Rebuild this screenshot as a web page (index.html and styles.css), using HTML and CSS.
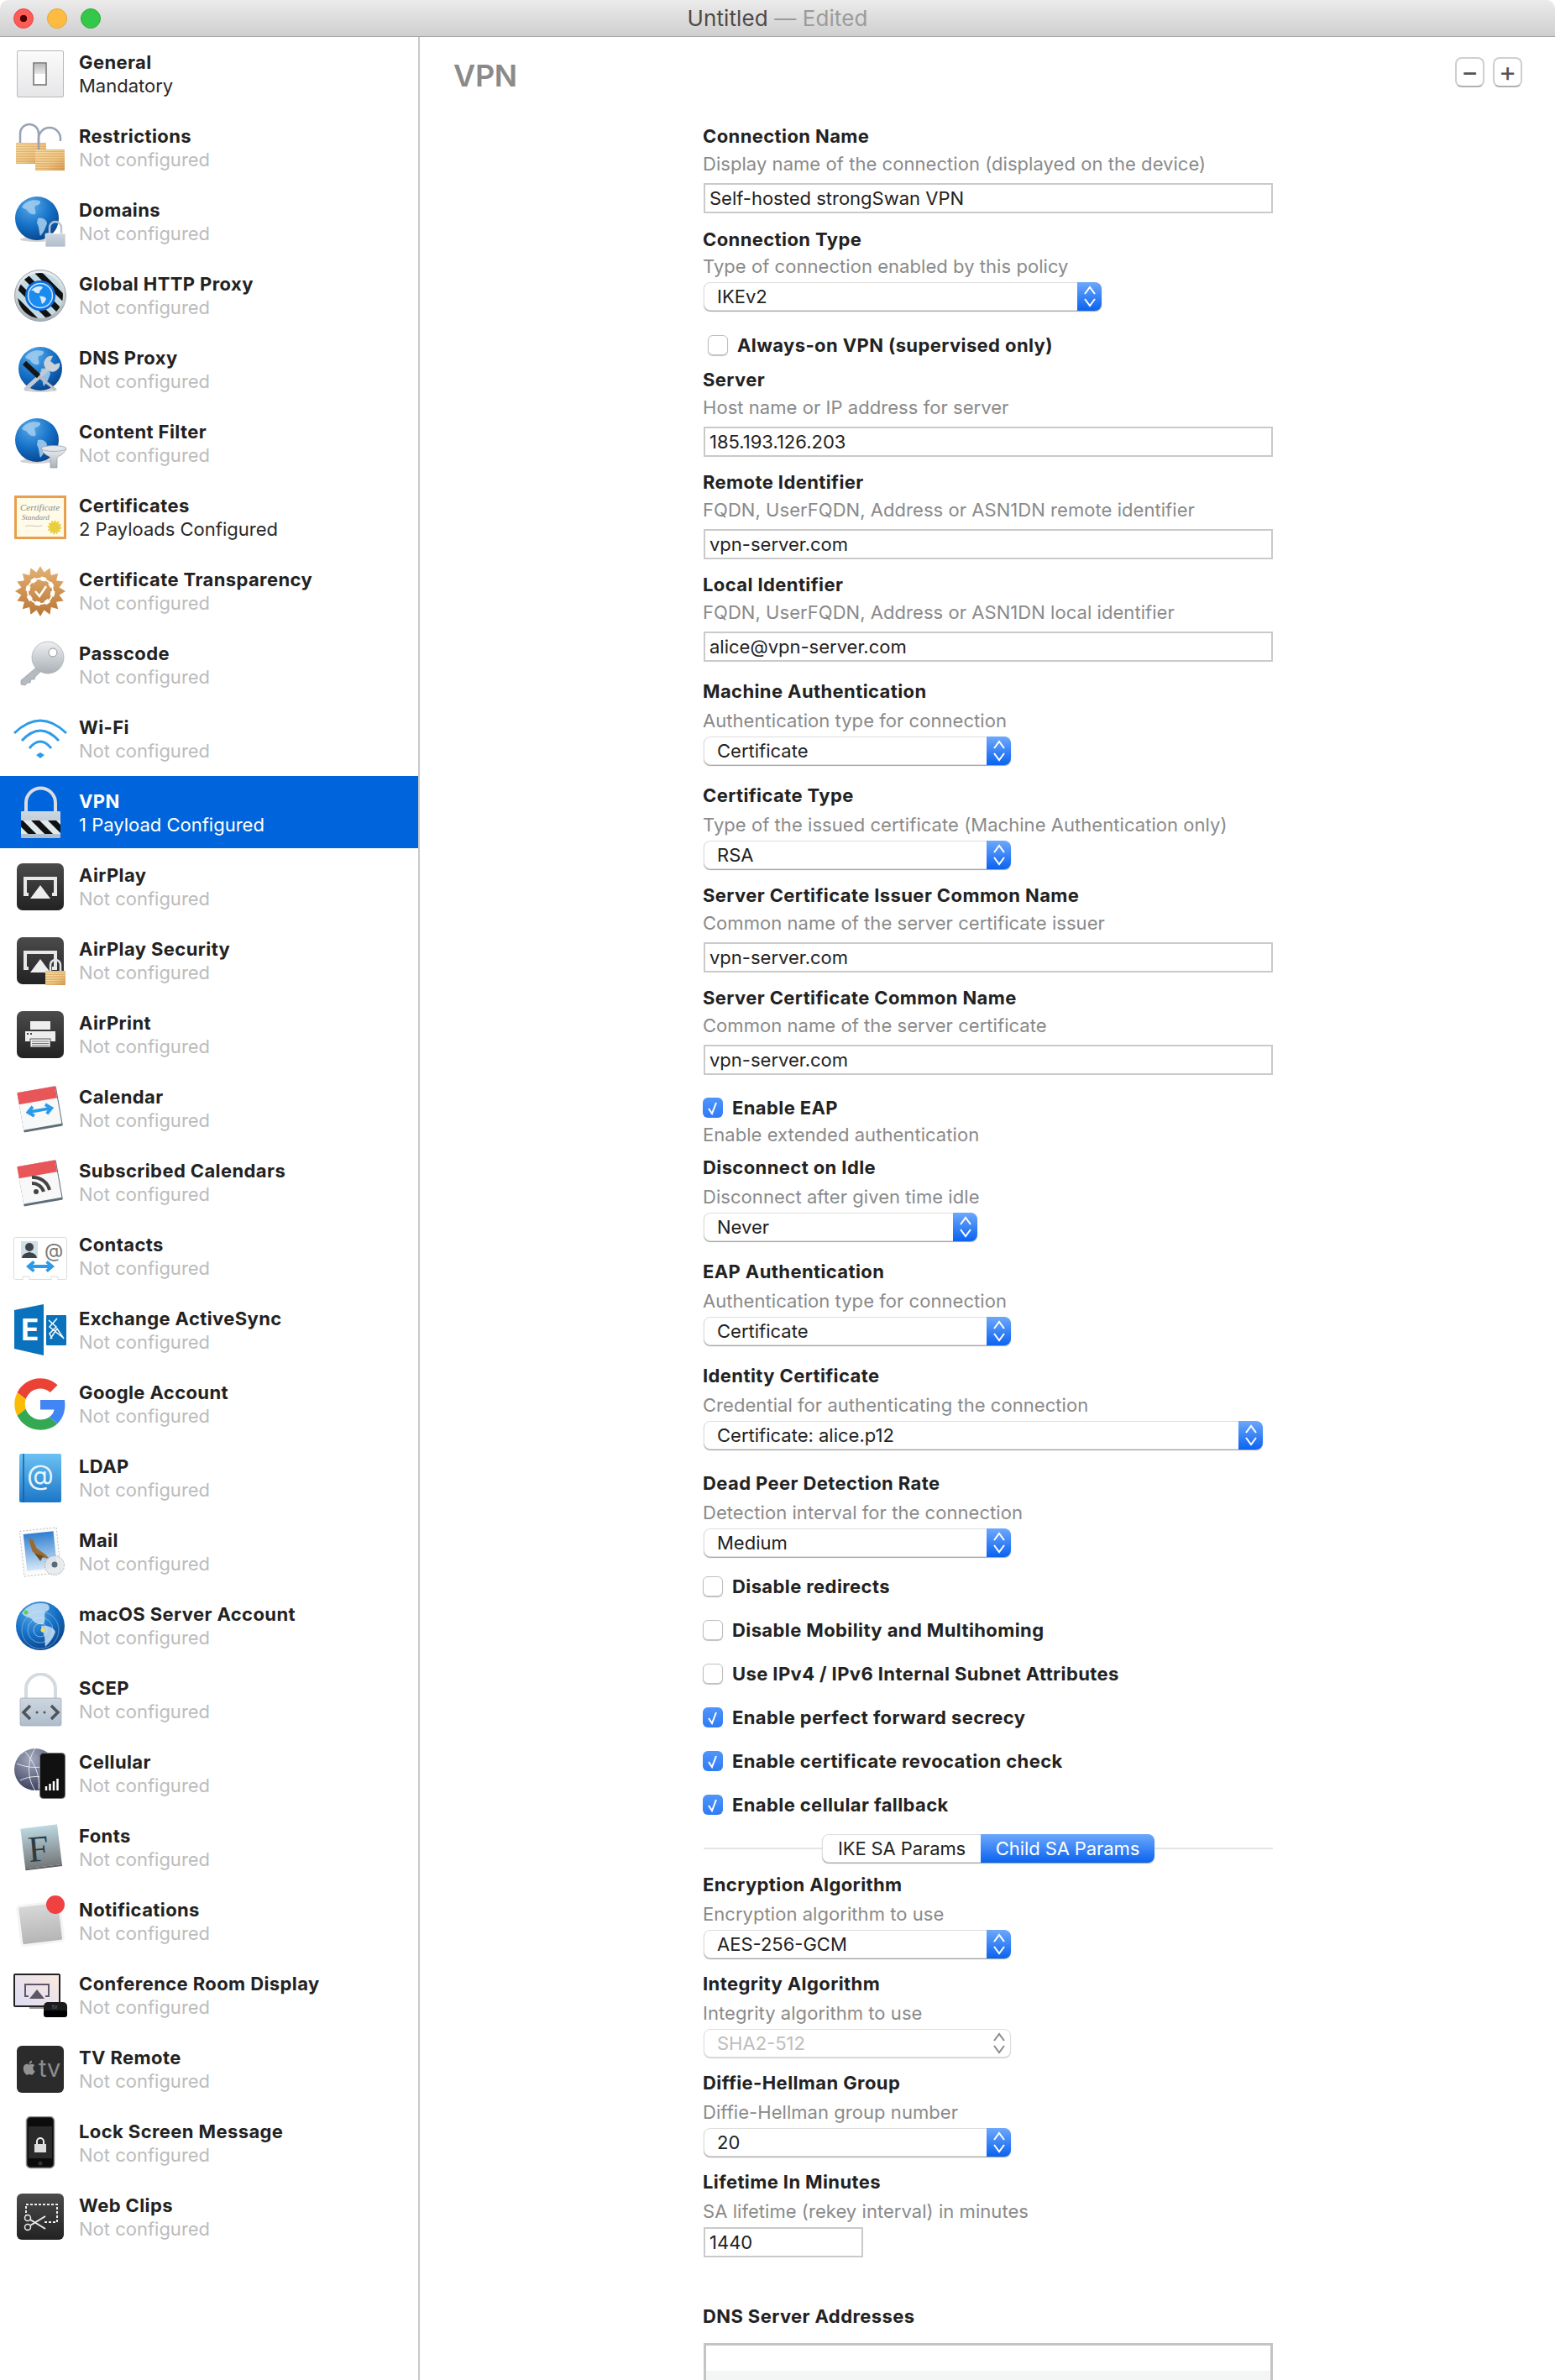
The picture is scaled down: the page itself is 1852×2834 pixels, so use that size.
FILE: index.html
```html
<!DOCTYPE html>
<html>
<head>
    <meta charset="utf-8">
    <title>Untitled</title>
    <link rel="stylesheet" href="styles.css">
</head>
<body>
    <svg class="defs" width="0" height="0">
        <defs>
            <radialGradient id="gGlobe" cx=".36" cy=".22" r=".85"><stop offset="0" stop-color="#57a9ea"/><stop offset=".55" stop-color="#1570c6"/><stop offset="1" stop-color="#063f87"/></radialGradient>
            <radialGradient id="gGlobeGrey" cx=".4" cy=".25" r=".85"><stop offset="0" stop-color="#a5acc0"/><stop offset="1" stop-color="#2e3350"/></radialGradient>
            <linearGradient id="gPaper" x1="0" y1="0" x2="0" y2="1"><stop offset="0" stop-color="#fbfbfb"/><stop offset="1" stop-color="#e6e6e8"/></linearGradient>
            <linearGradient id="gSwitch" x1="0" y1="0" x2="0" y2="1"><stop offset="0" stop-color="#bbb"/><stop offset="1" stop-color="#e8e8e8"/></linearGradient>
            <linearGradient id="gGold" x1="0" y1="0" x2="1" y2="1"><stop offset="0" stop-color="#f9e3b0"/><stop offset=".6" stop-color="#f0c98a"/><stop offset="1" stop-color="#d99a55"/></linearGradient>
            <linearGradient id="gDark" x1="0" y1="0" x2="0" y2="1"><stop offset="0" stop-color="#4b4b4b"/><stop offset="1" stop-color="#222"/></linearGradient>
            <linearGradient id="gSilver" x1="0" y1="0" x2="0" y2="1"><stop offset="0" stop-color="#eef0f2"/><stop offset="1" stop-color="#aab0b6"/></linearGradient>
            <linearGradient id="gSteel" x1="0" y1="0" x2="0" y2="1"><stop offset="0" stop-color="#ced7e0"/><stop offset="1" stop-color="#aebccb"/></linearGradient>
            <linearGradient id="gBadge" x1="0" y1="0" x2="0" y2="1"><stop offset="0" stop-color="#e4b273"/><stop offset="1" stop-color="#b97636"/></linearGradient>
            <linearGradient id="gBook" x1="0" y1="0" x2="0" y2="1"><stop offset="0" stop-color="#6cc2f4"/><stop offset="1" stop-color="#1b76c8"/></linearGradient>
            <linearGradient id="gSky" x1="0" y1="0" x2="0" y2="1"><stop offset="0" stop-color="#2f7fd0"/><stop offset="1" stop-color="#d5e8f7"/></linearGradient>
            <linearGradient id="gFont" x1="0" y1="0" x2="0" y2="1"><stop offset="0" stop-color="#bcd8e1"/><stop offset="1" stop-color="#75787a"/></linearGradient>
            <linearGradient id="gNote" x1="0" y1="0" x2="0" y2="1"><stop offset="0" stop-color="#d8d8d8"/><stop offset="1" stop-color="#b4b4b4"/></linearGradient>
            <linearGradient id="gScreen" x1="0" y1="1" x2="1" y2="0"><stop offset="0" stop-color="#dcdcf6"/><stop offset="1" stop-color="#fbe9dd"/></linearGradient>
            <pattern id="goldLines" width="2" height="2" patternUnits="userSpaceOnUse"><rect width="2" height="1" fill="#c98a3c" opacity=".45"/></pattern>
            <pattern id="zebra" width="14" height="14" patternUnits="userSpaceOnUse" patternTransform="rotate(-45)"><rect width="7" height="14" fill="#111"/></pattern>
            <clipPath id="ringClip"><circle cx="32" cy="32" r="27"/></clipPath>
            <symbol id="globe" viewBox="0 0 56 56">
                <ellipse cx="28" cy="52" rx="20" ry="3" fill="#000" opacity=".18"/>
                <circle cx="28" cy="27" r="26" fill="url(#gGlobe)"/>
                <path d="M10 13C15 6 23 4 31 6c3 2-1 6-5 6-2 4 2 6 0 10-4 1-8-1-10-5-2-2-5-1-6-4z" fill="#a8d0ef" opacity=".8"/>
                <path d="M29 27c5-2 11 2 11 6-2 6-4 11-8 15-2-6-1-11-4-15z" fill="#a8d0ef" opacity=".85"/>
            </symbol>
            <symbol id="chevrons" viewBox="0 0 16 28">
                <path d="M2 11L8 3l6 8M2 17l6 8 6-8" fill="none" stroke="currentColor" stroke-width="2"/>
            </symbol>
            <symbol id="check" viewBox="0 0 24 24">
                <path d="M7 13l4 6 5-13" fill="none" stroke="#fff" stroke-width="2"/>
            </symbol>
            <symbol id="swap" viewBox="0 0 36 16">
                <path d="M3 8H33M10 2L3 8l7 6M26 2l7 6-7 6" fill="none" stroke="#2a9bea" stroke-width="4"/>
            </symbol>
        </defs>
    </svg>

    <div class="window">
        <header class="titlebar">
            <div class="lights">
                <span class="light red"></span>
                <span class="light yellow"></span>
                <span class="light green"></span>
            </div>
            <div class="doc-title">Untitled <span class="doc-edited">— Edited</span></div>
        </header>

        <div class="panes">
            <ul class="sidebar">
                <li class="row">
                    <svg class="icon" viewBox="0 0 64 64"><rect x="4.5" y="4.5" width="55" height="55" rx="1.5" fill="url(#gPaper)" stroke="#b9b9b9"/><rect x="24" y="19" width="15" height="26" fill="#fff" stroke="#6f6f6f" stroke-width="1.5"/><rect x="25" y="20" width="13" height="12" fill="url(#gSwitch)"/></svg>
                    <div><div class="row-name">General</div><div class="row-sub set">Mandatory</div></div>
                </li>
                <li class="row">
                    <svg class="icon" viewBox="0 0 64 64"><path d="M8 27V15a11 11 0 0 1 22 0v12" fill="none" stroke="#97a3b5" stroke-width="2.5"/><rect x="3" y="26" width="36" height="25" rx="1" fill="url(#gGold)"/><rect x="3" y="26" width="36" height="25" fill="url(#goldLines)"/><path d="M30 35V21a13 13 0 0 1 26 0v3" fill="none" stroke="#97a3b5" stroke-width="2.5"/><rect x="26" y="34" width="35" height="25" rx="1" fill="url(#gGold)"/><rect x="26" y="34" width="35" height="25" fill="url(#goldLines)"/></svg>
                    <div><div class="row-name">Restrictions</div><div class="row-sub">Not configured</div></div>
                </li>
                <li class="row">
                    <svg class="icon" viewBox="0 0 64 64"><use href="#globe" x="0" y="1" width="56" height="56"/><path d="M43 47V39a7 7 0 0 1 14 0v8" fill="none" stroke="#b9c4d0" stroke-width="2.5"/><rect x="38" y="46" width="24" height="16" rx="1" fill="url(#gSteel)" stroke="#fff" stroke-width=".7"/></svg>
                    <div><div class="row-name">Domains</div><div class="row-sub">Not configured</div></div>
                </li>
                <li class="row">
                    <svg class="icon" viewBox="0 0 64 64"><circle cx="32" cy="32" r="30.5" fill="url(#gSilver)" stroke="#9aa3ac"/><circle cx="32" cy="32" r="27" fill="#c2dbe2"/><rect x="2" y="2" width="60" height="60" fill="url(#zebra)" clip-path="url(#ringClip)"/><circle cx="32" cy="32" r="18" fill="#0a6be0"/><circle cx="32" cy="32" r="14.5" fill="#1a8cf0" stroke="#cfe6fb" stroke-width="1.5"/><path d="M21 26c4-5 10-6 14-4-1 3-4 3-4 7-3 1-6-1-7-3zM31 33c3-1 8 1 8 3-1 3-3 5-5 6-1-3-1-6-3-9z" fill="#d8eafa"/></svg>
                    <div><div class="row-name">Global HTTP Proxy</div><div class="row-sub">Not configured</div></div>
                </li>
                <li class="row">
                    <svg class="icon" viewBox="0 0 64 64"><use href="#globe" x="4" y="4" width="56" height="56"/><path d="M14 56L42 30" stroke="#c5cad0" stroke-width="5"/><path d="M30 40L50 56" stroke="#b9bec4" stroke-width="3"/><path d="M13 24L30 40" stroke="#161616" stroke-width="6"/><path d="M55 24a9 9 0 0 1-14 9l-3-3a9 9 0 0 1 9-14l-3 6 5 4z" fill="#cdd2d8"/></svg>
                    <div><div class="row-name">DNS Proxy</div><div class="row-sub">Not configured</div></div>
                </li>
                <li class="row">
                    <svg class="icon" viewBox="0 0 64 64"><use href="#globe" x="0" y="1" width="56" height="56"/><path d="M33 38c4 10 11 8 11 12v11h8V50c0-4 7-2 11-12z" fill="url(#gSilver)" stroke="#8f99a3" stroke-width=".7"/><ellipse cx="48" cy="38" rx="15" ry="3.5" fill="#dfe5ea" stroke="#8f99a3" stroke-width=".7"/></svg>
                    <div><div class="row-name">Content Filter</div><div class="row-sub">Not configured</div></div>
                </li>
                <li class="row">
                    <svg class="icon" viewBox="0 0 64 64"><rect x="2.5" y="7.5" width="59" height="49" fill="#fffbe8" stroke="#e8a04e" stroke-width="3"/><text class="cert-text" x="8" y="24" font-size="11">Certificate</text><text class="cert-text" x="10" y="35" font-size="9">Standard</text><path d="M14 43c6-3 10 1 20-1" fill="none" stroke="#aaa" stroke-width=".7"/><circle cx="49" cy="44" r="6.5" fill="#e9cf3f"/><circle cx="49" cy="44" r="7" fill="none" stroke="#e9cf3f" stroke-width="2.5" stroke-dasharray="2 1.6"/></svg>
                    <div><div class="row-name">Certificates</div><div class="row-sub set">2 Payloads Configured</div></div>
                </li>
                <li class="row">
                    <svg class="icon" viewBox="0 0 64 64"><polygon points="32,2 36.5,9.4 43.5,4.3 44.8,12.9 53.2,10.8 51.1,19.2 59.7,20.5 54.6,27.5 62,32 54.6,36.5 59.7,43.5 51.1,44.8 53.2,53.2 44.8,51.1 43.5,59.7 36.5,54.6 32,62 27.5,54.6 20.5,59.7 19.2,51.1 10.8,53.2 12.9,44.8 4.3,43.5 9.4,36.5 2,32 9.4,27.5 4.3,20.5 12.9,19.2 10.8,10.8 19.2,12.9 20.5,4.3 27.5,9.4" fill="url(#gBadge)"/><circle cx="32" cy="32" r="15" fill="none" stroke="#fff" stroke-width="2"/><circle cx="32" cy="32" r="15" fill="none" stroke="#fff" stroke-width="5" stroke-dasharray="6 5.8"/><path d="M26 32l5 6 8-12" fill="none" stroke="#fff" stroke-width="2.5"/></svg>
                    <div><div class="row-name">Certificate Transparency</div><div class="row-sub">Not configured</div></div>
                </li>
                <li class="row">
                    <svg class="icon" viewBox="0 0 64 64"><path d="M27 35L9 50v5l5 1 3-3h3l1-4h4l1-3 6-6z" fill="#b4babf" stroke="#9aa0a6" stroke-width=".7"/><circle cx="41" cy="23" r="19" fill="url(#gSilver)" stroke="#a5aaaf" stroke-width=".7"/><circle cx="47" cy="17" r="5" fill="#fff" stroke="#8f969c"/></svg>
                    <div><div class="row-name">Passcode</div><div class="row-sub">Not configured</div></div>
                </li>
                <li class="row">
                    <svg class="icon" viewBox="0 0 64 64"><path d="M1 25Q32-5 63 25M10 34Q32 10 54 34M19 43Q32 27 45 43" fill="none" stroke="#2e9bea" stroke-width="3"/><path d="M27 51l5-3 5 3-5 4z" fill="#2e9bea"/></svg>
                    <div><div class="row-name">Wi-Fi</div><div class="row-sub">Not configured</div></div>
                </li>
                <li class="row selected">
                    <svg class="icon" viewBox="0 0 64 64"><path d="M15 32V20a17.5 17.5 0 0 1 35 0v12" fill="none" stroke="#d9dce0" stroke-width="4"/><rect x="9" y="30" width="47" height="32" rx="1" fill="url(#gSteel)"/><rect x="9" y="41" width="47" height="16" fill="#dfeaee"/><rect x="9" y="41" width="47" height="16" fill="url(#zebra)"/></svg>
                    <div><div class="row-name">VPN</div><div class="row-sub set">1 Payload Configured</div></div>
                </li>
                <li class="row">
                    <svg class="icon" viewBox="0 0 64 64"><rect x="4" y="4" width="56" height="56" rx="7" fill="url(#gDark)"/><path d="M18 41h-4V22h36v19h-4" fill="none" stroke="#e8e8e8" stroke-width="4"/><path d="M32 30l12 16H20z" fill="#eee"/></svg>
                    <div><div class="row-name">AirPlay</div><div class="row-sub">Not configured</div></div>
                </li>
                <li class="row">
                    <svg class="icon" viewBox="0 0 64 64"><rect x="4" y="4" width="56" height="56" rx="7" fill="url(#gDark)"/><path d="M18 41h-4V22h36v19h-4" fill="none" stroke="#e8e8e8" stroke-width="4"/><path d="M32 30l12 16H20z" fill="#eee"/><path d="M44 45v-8a6 6 0 0 1 12 0v8" fill="none" stroke="#e0e4ea" stroke-width="2.5"/><rect x="38" y="44" width="24" height="17" rx="1" fill="url(#gGold)"/><rect x="38" y="44" width="24" height="17" fill="url(#goldLines)"/></svg>
                    <div><div class="row-name">AirPlay Security</div><div class="row-sub">Not configured</div></div>
                </li>
                <li class="row">
                    <svg class="icon" viewBox="0 0 64 64"><rect x="4" y="4" width="56" height="56" rx="7" fill="url(#gDark)"/><rect x="20" y="16" width="24" height="10" fill="#eee"/><rect x="14" y="28" width="36" height="12" fill="#eee"/><rect x="16" y="30" width="2" height="2" fill="#444"/><rect x="20" y="30" width="2" height="2" fill="#444"/><rect x="20" y="37" width="24" height="10" fill="#eee" stroke="#333" stroke-width=".8"/><path d="M22 40h20M22 42.500h20M22 45h20" stroke="#555" stroke-width=".8"/></svg>
                    <div><div class="row-name">AirPrint</div><div class="row-sub">Not configured</div></div>
                </li>
                <li class="row">
                    <svg class="icon" viewBox="0 0 64 64"><g transform="rotate(-10 31 32)"><rect x="8" y="9" width="47" height="48" rx="1.500" fill="#5e6e79"/><rect x="8" y="9" width="46" height="45" fill="#f8f8f8"/><rect x="8" y="9" width="46" height="14" fill="#e8565a"/><use href="#swap" x="14" y="26" width="34" height="16"/></g></svg>
                    <div><div class="row-name">Calendar</div><div class="row-sub">Not configured</div></div>
                </li>
                <li class="row">
                    <svg class="icon" viewBox="0 0 64 64"><g transform="rotate(-10 31 32)"><rect x="8" y="9" width="47" height="48" rx="1.500" fill="#5e6e79"/><rect x="8" y="9" width="46" height="45" fill="#f8f8f8"/><rect x="8" y="9" width="46" height="14" fill="#e8565a"/></g><circle cx="27" cy="43" r="3" fill="#444"/><path d="M22 33a14 14 0 0 1 14 10M22 26a20 20 0 0 1 21 15" fill="none" stroke="#444" stroke-width="4"/></svg>
                    <div><div class="row-name">Subscribed Calendars</div><div class="row-sub">Not configured</div></div>
                </li>
                <li class="row">
                    <svg class="icon" viewBox="0 0 64 64"><rect x="0.500" y="9.500" width="63" height="50" rx="2" fill="#fff" stroke="#dcdcdc"/><rect x="9" y="14" width="20" height="20" fill="#cfdfe5"/><circle cx="19" cy="21" r="5" fill="#3a4449"/><path d="M10 34c1-6 6-6 9-7 3 1 8 1 9 7z" fill="#3a4449"/><text class="glyph" x="37" y="33" font-size="23" fill="#777">@</text><use href="#swap" x="15" y="36" width="34" height="16"/><path d="M11 60v-4h8v4M45 60v-4h8v4" fill="#fff" stroke="#ddd"/></svg>
                    <div><div class="row-name">Contacts</div><div class="row-sub">Not configured</div></div>
                </li>
                <li class="row">
                    <svg class="icon" viewBox="0 0 64 64"><rect x="39" y="14" width="24" height="36" rx="1" fill="#0a72bc"/><path d="M42 20l9 8-8 8 3 6M44 42l8-12 8 12M52 18l-9 10 15 12" fill="none" stroke="#fff" stroke-width="1.500"/><path d="M1 8L36 1v61L1 54z" fill="#0a72bc"/><text class="glyph" x="9" y="44" font-size="35" font-weight="700" fill="#fff">E</text></svg>
                    <div><div class="row-name">Exchange ActiveSync</div><div class="row-sub">Not configured</div></div>
                </li>
                <li class="row">
                    <svg class="icon" viewBox="-1 0 50 48"><path fill="#EA4335" d="M24 9.500c3.540 0 6.710 1.220 9.210 3.600l6.850-6.850C35.900 2.380 30.470 0 24 0 14.620 0 6.510 5.380 2.560 13.220l7.980 6.190C12.430 13.720 17.740 9.500 24 9.500z"/><path fill="#4285F4" d="M46.980 24.550c0-1.570-.15-3.090-.38-4.550H24v9.020h12.940c-.58 2.960-2.260 5.480-4.780 7.180l7.730 6c4.510-4.180 7.090-10.360 7.090-17.650z"/><path fill="#FBBC05" d="M10.530 28.590c-.48-1.450-.76-2.990-.76-4.590s.27-3.140.76-4.590l-7.980-6.190C.92 16.460 0 20.120 0 24c0 3.880.92 7.540 2.560 10.780l7.970-6.190z"/><path fill="#34A853" d="M24 48c6.480 0 11.930-2.130 15.890-5.810l-7.730-6c-2.150 1.450-4.920 2.300-8.160 2.300-6.260 0-11.570-4.220-13.470-9.910l-7.980 6.190C6.510 42.620 14.620 48 24 48z"/></svg>
                    <div><div class="row-name">Google Account</div><div class="row-sub">Not configured</div></div>
                </li>
                <li class="row">
                    <svg class="icon" viewBox="0 0 64 64"><rect x="7" y="3" width="50" height="58" rx="2" fill="url(#gBook)"/><path d="M12 3v58" stroke="#14609f" stroke-width="1.500"/><text class="glyph" x="16" y="40" font-size="33" fill="#e4f4fd">@</text></svg>
                    <div><div class="row-name">LDAP</div><div class="row-sub">Not configured</div></div>
                </li>
                <li class="row">
                    <svg class="icon" viewBox="0 0 64 64"><g transform="rotate(-6 32 32)"><rect x="10" y="5" width="44" height="54" fill="#fbfbfb" stroke="#bbb" stroke-dasharray="2 2"/><rect x="14" y="9" width="36" height="44" fill="url(#gSky)"/><path d="M20 14l5 3 3 10 10 9 4 5-11-3-8-7-2-9z" fill="#9a6a30"/><path d="M25 33l10 4-4 6z" fill="#6e4a1f"/></g><circle cx="49" cy="48" r="11.500" fill="#e5e8ea" opacity=".8" stroke="#8d9398" stroke-dasharray="1.500 1.500"/><circle cx="49" cy="47" r="3.500" fill="#5a6a78"/></svg>
                    <div><div class="row-name">Mail</div><div class="row-sub">Not configured</div></div>
                </li>
                <li class="row">
                    <svg class="icon" viewBox="0 0 64 64"><circle cx="32" cy="32" r="29" fill="url(#gGlobe)"/><path d="M10 17C17 6 30 3 40 6c4 2 4 8-2 9-2 6 1 9-2 15-6 1-11-1-14-6-4-3-8-2-12-7zM33 32c7-1 14 1 17 7-2 7-7 13-12 18-1-8 0-14-4-19z" fill="#c4def3" opacity=".85"/><circle cx="32" cy="37" r="8" fill="none" stroke="#dceaf6" stroke-width=".8" opacity=".7"/><circle cx="32" cy="37" r="15" fill="none" stroke="#dceaf6" stroke-width=".8" opacity=".6"/><circle cx="32" cy="37" r="22" fill="none" stroke="#dceaf6" stroke-width=".8" opacity=".5"/><circle cx="15" cy="16" r="2.500" fill="#5fd23c"/><circle cx="35" cy="37" r="2.500" fill="#ffe040"/></svg>
                    <div><div class="row-name">macOS Server Account</div><div class="row-sub">Not configured</div></div>
                </li>
                <li class="row">
                    <svg class="icon" viewBox="0 0 64 64"><path d="M15 32V19a17.500 17.500 0 0 1 35 0v13" fill="none" stroke="#d4dae1" stroke-width="4"/><rect x="8" y="30" width="49" height="33" rx="2" fill="url(#gSteel)" stroke="#9aa6b2" stroke-width=".7"/><path d="M20 39l-8 8 8 8M45 39l8 8-8 8" fill="none" stroke="#4c545c" stroke-width="3.500"/><circle cx="28" cy="47" r="1.500" fill="#4c545c"/><circle cx="37" cy="47" r="1.500" fill="#4c545c"/></svg>
                    <div><div class="row-name">SCEP</div><div class="row-sub">Not configured</div></div>
                </li>
                <li class="row">
                    <svg class="icon" viewBox="0 0 64 64"><circle cx="26" cy="27" r="25" fill="url(#gGlobeGrey)"/><path d="M4 20c14 6 30 6 44 0M8 40c12-6 26-6 38 0M26 2c-10 14-10 36 0 50M14 6c10 12 18 26 16 44" fill="none" stroke="#e5e8f0" stroke-width="1"/><rect x="31.500" y="7.500" width="30" height="54" rx="4" fill="#111" stroke="#777"/><path d="M39 52v-5M43.500 52v-8M48 52V41M52.500 52V38" stroke="#fff" stroke-width="2.500"/></svg>
                    <div><div class="row-name">Cellular</div><div class="row-sub">Not configured</div></div>
                </li>
                <li class="row">
                    <svg class="icon" viewBox="0 0 64 64"><g transform="rotate(-7 32 30)"><rect x="11" y="7" width="44" height="48" fill="url(#gFont)"/><rect x="11" y="55" width="44" height="2" fill="#5c5e60"/></g><text class="font-letter" x="17" y="48" font-size="44" fill="#2d3c42" transform="rotate(-5 32 30)">F</text></svg>
                    <div><div class="row-name">Fonts</div><div class="row-sub">Not configured</div></div>
                </li>
                <li class="row">
                    <svg class="icon" viewBox="0 0 64 64"><g transform="rotate(-7 32 33)"><rect x="7" y="11" width="50" height="47" rx="3" fill="url(#gNote)" stroke="#f4f4f4" stroke-width="3"/></g><circle cx="50" cy="12" r="11" fill="#f0403f"/></svg>
                    <div><div class="row-name">Notifications</div><div class="row-sub">Not configured</div></div>
                </li>
                <li class="row">
                    <svg class="icon" viewBox="0 0 64 64"><rect x="1" y="7" width="54" height="38" rx="1" fill="url(#gScreen)" stroke="#222" stroke-width="2"/><path d="M18 33h-4V19h28v14h-4" fill="none" stroke="#5d5666" stroke-width="2"/><path d="M28 25l9 11H19z" fill="#5d5666"/><path d="M19 47h18" stroke="#999" stroke-width="2"/><rect x="36" y="40" width="28" height="18" rx="5" fill="#1b1b1b"/><rect x="36" y="50" width="28" height="8" rx="3" fill="#000"/><text class="glyph" x="46" y="48" font-size="7" fill="#777">tv</text></svg>
                    <div><div class="row-name">Conference Room Display</div><div class="row-sub">Not configured</div></div>
                </li>
                <li class="row">
                    <svg class="icon" viewBox="0 0 64 64"><rect x="4" y="4" width="56" height="56" rx="6" fill="#2b2b2b"/><path transform="translate(8.500 20) scale(.85)" fill="#929292" d="M18.710 19.500c-.83 1.240-1.710 2.450-3.050 2.470-1.340.03-1.770-.79-3.290-.79-1.530 0-2 .77-3.270.82-1.310.05-2.300-1.320-3.140-2.530C4.250 17 2.940 12.450 4.700 9.390c.87-1.520 2.430-2.480 4.120-2.510 1.280-.02 2.500.87 3.290.87.78 0 2.260-1.070 3.810-.91.65.03 2.470.26 3.640 1.980-.09.06-2.170 1.280-2.150 3.810.03 3.020 2.650 4.030 2.680 4.040-.03.07-.42 1.440-1.380 2.830M13 3.500c.73-.83 1.940-1.460 2.940-1.500.13 1.170-.34 2.350-1.040 3.190-.69.85-1.830 1.510-2.950 1.420-.15-1.150.41-2.350 1.050-3.110z"/><text class="glyph" x="30" y="41" font-size="29" fill="#8c8c8c">tv</text></svg>
                    <div><div class="row-name">TV Remote</div><div class="row-sub">Not configured</div></div>
                </li>
                <li class="row">
                    <svg class="icon" viewBox="0 0 64 64"><rect x="15.500" y="0.500" width="33" height="61" rx="5" fill="#0c0c0c" stroke="#8a8a8a" stroke-width="1.500"/><rect x="18" y="12" width="28" height="38" fill="#2b2b2b"/><path d="M28 34v-4a4 4 0 0 1 8 0v4" fill="none" stroke="#eee" stroke-width="2"/><rect x="25" y="33" width="14" height="10" fill="#ddd"/><circle cx="32" cy="56" r="2.500" fill="#333"/></svg>
                    <div><div class="row-name">Lock Screen Message</div><div class="row-sub">Not configured</div></div>
                </li>
                <li class="row">
                    <svg class="icon" viewBox="0 0 64 64"><rect x="4" y="4" width="56" height="55" rx="6" fill="url(#gDark)"/><path d="M37 38h15V17H15v13" fill="none" stroke="#eee" stroke-width="2" stroke-dasharray="3 2"/><circle cx="17" cy="33" r="3.500" fill="none" stroke="#eee" stroke-width="1.500"/><circle cx="17" cy="44" r="3.500" fill="none" stroke="#eee" stroke-width="1.500"/><path d="M20 35l18 11M20 42l18-11" stroke="#eee" stroke-width="2"/></svg>
                    <div><div class="row-name">Web Clips</div><div class="row-sub">Not configured</div></div>
                </li>
            </ul>

            <main class="content">
                <div class="content-head">
                    <h1>VPN</h1>
                    <div class="head-buttons">
                        <button class="square-btn">−</button>
                        <button class="square-btn">+</button>
                    </div>
                </div>

                <form class="form">
                    <div class="field first">
                        <div class="label">Connection Name</div>
                        <div class="desc">Display name of the connection (displayed on the device)</div>
                        <input class="text-input" value="Self-hosted strongSwan VPN">
                    </div>
                    <div class="field pick tight mt-20">
                        <div class="label">Connection Type</div>
                        <div class="desc">Type of connection enabled by this policy</div>
                        <div class="select w-wide"><span>IKEv2</span><span class="arrow"><svg width="16" height="28"><use href="#chevrons"/></svg></span></div>
                    </div>
                    <label class="check-row indent mt-29"><span class="box"></span>Always-on VPN (supervised only)</label>
                    <div class="field mt-18">
                        <div class="label">Server</div>
                        <div class="desc">Host name or IP address for server</div>
                        <input class="text-input" value="185.193.126.203">
                    </div>
                    <div class="field">
                        <div class="label">Remote Identifier</div>
                        <div class="desc">FQDN, UserFQDN, Address or ASN1DN remote identifier</div>
                        <input class="text-input" value="vpn-server.com">
                    </div>
                    <div class="field">
                        <div class="label">Local Identifier</div>
                        <div class="desc">FQDN, UserFQDN, Address or ASN1DN local identifier</div>
                        <input class="text-input" value="alice@vpn-server.com">
                    </div>
                    <div class="field pick mt-24">
                        <div class="label">Machine Authentication</div>
                        <div class="desc">Authentication type for connection</div>
                        <div class="select"><span>Certificate</span><span class="arrow"><svg width="16" height="28"><use href="#chevrons"/></svg></span></div>
                    </div>
                    <div class="field pick mt-25">
                        <div class="label">Certificate Type</div>
                        <div class="desc">Type of the issued certificate (Machine Authentication only)</div>
                        <div class="select"><span>RSA</span><span class="arrow"><svg width="16" height="28"><use href="#chevrons"/></svg></span></div>
                    </div>
                    <div class="field mt-20">
                        <div class="label">Server Certificate Issuer Common Name</div>
                        <div class="desc">Common name of the server certificate issuer</div>
                        <input class="text-input" value="vpn-server.com">
                    </div>
                    <div class="field">
                        <div class="label">Server Certificate Common Name</div>
                        <div class="desc">Common name of the server certificate</div>
                        <input class="text-input" value="vpn-server.com">
                    </div>
                    <label class="check-row mt-27"><span class="box on"><svg width="24" height="24"><use href="#check"/></svg></span>Enable EAP</label>
                    <div class="desc check-desc">Enable extended authentication</div>
                    <div class="field pick mt-15">
                        <div class="label">Disconnect on Idle</div>
                        <div class="desc">Disconnect after given time idle</div>
                        <div class="select w-short"><span>Never</span><span class="arrow"><svg width="16" height="28"><use href="#chevrons"/></svg></span></div>
                    </div>
                    <div class="field pick mt-25">
                        <div class="label">EAP Authentication</div>
                        <div class="desc">Authentication type for connection</div>
                        <div class="select"><span>Certificate</span><span class="arrow"><svg width="16" height="28"><use href="#chevrons"/></svg></span></div>
                    </div>
                    <div class="field pick mt-25">
                        <div class="label">Identity Certificate</div>
                        <div class="desc">Credential for authenticating the connection</div>
                        <div class="select w-full"><span>Certificate: alice.p12</span><span class="arrow"><svg width="16" height="28"><use href="#chevrons"/></svg></span></div>
                    </div>
                    <div class="field pick mt-29">
                        <div class="label">Dead Peer Detection Rate</div>
                        <div class="desc">Detection interval for the connection</div>
                        <div class="select"><span>Medium</span><span class="arrow"><svg width="16" height="28"><use href="#chevrons"/></svg></span></div>
                    </div>
                    <label class="check-row mt-23"><span class="box"></span>Disable redirects</label>
                    <label class="check-row mt-28"><span class="box"></span>Disable Mobility and Multihoming</label>
                    <label class="check-row mt-28"><span class="box"></span>Use IPv4 / IPv6 Internal Subnet Attributes</label>
                    <label class="check-row mt-28"><span class="box on"><svg width="24" height="24"><use href="#check"/></svg></span>Enable perfect forward secrecy</label>
                    <label class="check-row mt-28"><span class="box on"><svg width="24" height="24"><use href="#check"/></svg></span>Enable certificate revocation check</label>
                    <label class="check-row mt-28"><span class="box on"><svg width="24" height="24"><use href="#check"/></svg></span>Enable cellular fallback</label>

                    <div class="tabs mt-23">
                        <span class="tab-line"></span>
                        <div class="segment">
                            <span class="tab">IKE SA Params</span>
                            <span class="tab active">Child SA Params</span>
                        </div>
                        <span class="tab-line"></span>
                    </div>

                    <div class="field pick mt-15">
                        <div class="label">Encryption Algorithm</div>
                        <div class="desc">Encryption algorithm to use</div>
                        <div class="select"><span>AES-256-GCM</span><span class="arrow"><svg width="16" height="28"><use href="#chevrons"/></svg></span></div>
                    </div>
                    <div class="field pick">
                        <div class="label">Integrity Algorithm</div>
                        <div class="desc">Integrity algorithm to use</div>
                        <div class="select disabled"><span>SHA2-512</span><span class="arrow"><svg width="16" height="28"><use href="#chevrons"/></svg></span></div>
                    </div>
                    <div class="field pick">
                        <div class="label">Diffie-Hellman Group</div>
                        <div class="desc">Diffie-Hellman group number</div>
                        <div class="select"><span>20</span><span class="arrow"><svg width="16" height="28"><use href="#chevrons"/></svg></span></div>
                    </div>
                    <div class="field pick">
                        <div class="label">Lifetime In Minutes</div>
                        <div class="desc">SA lifetime (rekey interval) in minutes</div>
                        <input class="text-input w-number" value="1440">
                    </div>
                    <div class="field dns">
                        <div class="label">DNS Server Addresses</div>
                        <div class="list-box">
                            <div class="list-row"></div>
                            <div class="list-row alt"></div>
                        </div>
                    </div>
                </form>
            </main>
        </div>
    </div>
</body>
</html>
```
FILE: styles.css
```css
* {
    box-sizing: border-box;
}
html, body {
    margin: 0;
    height: 2834px;
    overflow: hidden;
    background: #fff;
}
body {
    font-family: Inter, "Liberation Sans", sans-serif;
    font-size: 22px;
    color: #222;
}
.defs {
    display: block;
}

/* window chrome */
.titlebar {
    display: grid;
    grid-template-columns: 1fr auto 1fr;
    align-items: center;
    height: 44px;
    padding: 0 16px;
    background: linear-gradient(#ebebeb, #cfcfcf);
    border-bottom: 1px solid #a6a6a6;
    border-radius: 10px 10px 0 0;
}
.lights {
    display: flex;
    gap: 16px;
}
.light {
    width: 24px;
    height: 24px;
    border-radius: 50%;
}
.light.red {
    background: radial-gradient(circle, #4d0000 0 4px, #fc5b57 4.5px);
    border: 1px solid #e2463f;
}
.light.yellow {
    background: #fdbc40;
    border: 1px solid #e1a73e;
}
.light.green {
    background: #34c84a;
    border: 1px solid #2dac2f;
}
.doc-title {
    font-size: 26px;
    letter-spacing: 0.1px;
    color: #4a4a4a;
}
.doc-edited {
    color: #9b9b9b;
}
.panes {
    display: flex;
    height: 2790px;
}

/* sidebar */
.sidebar {
    width: 500px;
    flex: none;
    margin: 0;
    padding: 0;
    list-style: none;
    border-right: 2px solid #c8c8c8;
}
.row {
    display: flex;
    align-items: center;
    gap: 14px;
    height: 88px;
    padding-left: 16px;
}
.row.selected {
    background: linear-gradient(#0064dc, #0064dc) top / 100% 86px no-repeat;
    color: #fff;
}
.icon {
    width: 64px;
    height: 64px;
    flex: none;
}
.row-name {
    font-weight: 700;
    line-height: 28px;
    letter-spacing: 0.4px;
}
.row-sub {
    line-height: 28px;
    color: #bcbcbc;
}
.row-sub.set {
    color: #2a2a2a;
}
.row.selected .row-sub {
    color: #fff;
}
.cert-text {
    font-family: "Liberation Serif", serif;
    font-style: italic;
    fill: #8a8a8a;
}
.glyph {
    font-family: Inter, sans-serif;
}
.font-letter {
    font-family: "Liberation Serif", serif;
}

/* right pane */
.content {
    flex: 1;
    overflow: hidden;
}
.content-head {
    display: flex;
    justify-content: space-between;
    padding: 24px 39px 0 40px;
}
h1 {
    margin: 0;
    font-size: 36px;
    line-height: 44px;
    font-weight: 600;
    letter-spacing: -0.3px;
    color: #8a8a8a;
}
.head-buttons {
    display: flex;
    gap: 10px;
}
.square-btn {
    width: 35px;
    height: 36px;
    padding: 0;
    font: 400 32px/30px Inter, sans-serif;
    color: #555;
    background: #fff;
    border: 2px solid #cfcfcf;
    border-bottom-color: #b0b0b0;
    border-radius: 8px;
}
.form {
    width: 678px;
    margin: 39px 0 0 338px;
}
.field {
    margin-top: 19px;
}
.field.first {
    margin-top: 0;
}
.mt-15 { margin-top: 15px; }
.mt-18 { margin-top: 18px; }
.mt-20 { margin-top: 20px; }
.mt-23 { margin-top: 23px; }
.mt-24 { margin-top: 24px; }
.mt-25 { margin-top: 25px; }
.mt-27 { margin-top: 27px; }
.mt-28 { margin-top: 28px; }
.mt-29 { margin-top: 29px; }

.label {
    height: 24px;
    margin-left: -1px;
    line-height: 22px;
    font-weight: 700;
    letter-spacing: 0.4px;
}
.desc {
    height: 24px;
    margin-top: 9px;
    margin-bottom: 10px;
    margin-left: -1px;
    line-height: 22px;
    color: #8a8a8a;
    letter-spacing: 0.05px;
}
.pick .desc {
    margin-top: 11px;
    margin-bottom: 6px;
}
.tight .desc {
    margin-top: 8px;
    margin-bottom: 6px;
}
.text-input {
    display: block;
    width: 100%;
    height: 36px;
    padding: 0 5px;
    font: 400 22px Inter, sans-serif;
    color: #222;
    background: #fff;
    border: 2px solid #cacaca;
    border-radius: 0;
}
.w-number {
    width: 190px;
}

/* popup buttons */
.select {
    display: flex;
    justify-content: space-between;
    width: 366px;
    height: 34px;
    padding-left: 15px;
    line-height: 32px;
    background: #fff;
    border: 1px solid #dedede;
    border-radius: 8px;
    box-shadow: 0 1px 1px #a0a0a0;
}
.select.w-wide { width: 474px; }
.select.w-short { width: 326px; }
.select.w-full { width: 666px; }
.arrow {
    display: flex;
    align-items: center;
    justify-content: center;
    width: 29px;
    margin: -1px -1px -1px 0;
    color: #fff;
    background: linear-gradient(#6da8fb, #0a63f0);
    border-radius: 0 8px 8px 0;
}
.select.disabled {
    color: #bdbdbd;
    box-shadow: 0 1px 1px #d0d0d0;
}
.select.disabled .arrow {
    color: #8a8a8a;
    background: none;
}

/* checkboxes */
.check-row {
    display: flex;
    align-items: center;
    gap: 11px;
    height: 24px;
    margin-left: -1px;
    font-weight: 700;
    line-height: 22px;
    letter-spacing: 0.4px;
}
.check-row.indent {
    padding-left: 6px;
}
.box {
    width: 24px;
    height: 24px;
    flex: none;
    background: #fff;
    border: 1px solid #bfbfbf;
    border-radius: 6px;
    box-shadow: 0 1px 1px #c0c0c0;
}
.box.on {
    background: linear-gradient(#4f95fb, #2f7bf5);
    border: 0;
    box-shadow: none;
}
.check-desc {
    margin: 9px 0 0 -1px;
}

/* segmented control */
.tabs {
    display: flex;
    align-items: center;
    height: 34px;
}
.tab-line {
    flex: 1;
    height: 2px;
    background: #e4e4e4;
}
.segment {
    display: flex;
    width: 396px;
    height: 34px;
    line-height: 32px;
    background: #fff;
    border: 1px solid #dedede;
    border-radius: 8px;
    box-shadow: 0 1px 1px #a0a0a0;
    text-align: center;
    letter-spacing: -0.1px;
}
.tab {
    width: 188px;
}
.tab.active {
    flex: 1;
    margin: -1px -1px -1px 0;
    line-height: 34px;
    color: #fff;
    background: linear-gradient(#6da8fb, #0a63f0);
    border-radius: 0 8px 8px 0;
}

/* list at the bottom */
.field.dns {
    margin-top: 59px;
}
.list-box {
    margin-top: 19px;
    border: 3px solid #c4c4c4;
    border-bottom: 0;
}
.list-row {
    height: 30px;
}
.list-row.alt {
    background: #f4f5f5;
}
```
